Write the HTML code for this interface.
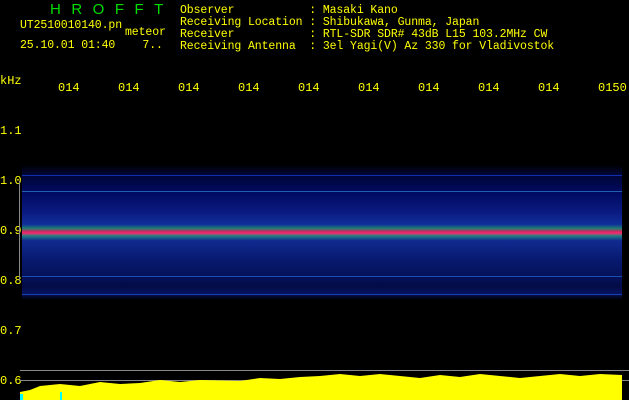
<!DOCTYPE html>
<html><head><meta charset="utf-8"><style>
body{margin:0;background:#000;width:629px;height:400px;overflow:hidden;position:relative;font-family:"Liberation Mono",monospace;color:#ff0;}
.t{position:absolute;font-size:11.5px;line-height:12px;white-space:pre;letter-spacing:-0.1px}
.g{color:#0d0;font-size:15px;font-family:"Liberation Sans",sans-serif;position:absolute;letter-spacing:10.5px;top:1px;left:50px}
.xl{position:absolute;top:81px;font-size:12px}
.yl{position:absolute;left:0;font-size:12px}
</style></head><body>
<div class="g">HROFFT</div>
<div class="t" style="left:20px;top:20px">UT2510010140.pn</div>
<div class="t" style="left:125px;top:27px">meteor</div>
<div class="t" style="left:20px;top:40px">25.10.01 01:40    7..</div>
<div class="t" style="left:180px;top:5px">Observer           : Masaki Kano
Receiving Location : Shibukawa, Gunma, Japan
Receiver           : RTL-SDR SDR# 43dB L15 103.2MHz CW
Receiving Antenna  : 3el Yagi(V) Az 330 for Vladivostok</div>
<div class="xl" style="left:0;top:74px">kHz</div>
<div class="xl" style="left:58px">014</div><div class="xl" style="left:118px">014</div><div class="xl" style="left:178px">014</div><div class="xl" style="left:238px">014</div><div class="xl" style="left:298px">014</div><div class="xl" style="left:358px">014</div><div class="xl" style="left:418px">014</div><div class="xl" style="left:478px">014</div><div class="xl" style="left:538px">014</div><div class="xl" style="left:598px">0150</div>
<div class="yl" style="top:124px">1.1</div><div class="yl" style="top:174px">1.0</div><div class="yl" style="top:224px">0.9</div><div class="yl" style="top:274px">0.8</div><div class="yl" style="top:324px">0.7</div><div class="yl" style="top:374px">0.6</div>
<div style="position:absolute;left:19px;top:181px;width:1px;height:100px;background:#888"></div>
<div style="position:absolute;left:22px;top:165px;width:600px;height:135px;background:linear-gradient(to bottom,#000 0,#000530 8px,#000a60 20%,#0a1a80 35%,#10309a 44%,#208070 47%,#e02060 49.5%,#f03070 50.5%,#208080 52.5%,#102a90 56%,#081a70 70%,#040f55 85%,#040c45 90%,#061260 95%,#000 100%)"></div>
<div style="position:absolute;left:22px;top:175px;width:600px;height:1px;background:#1030b0"></div>
<div style="position:absolute;left:22px;top:191px;width:600px;height:1px;background:#2060b0"></div>
<div style="position:absolute;left:22px;top:276px;width:600px;height:1px;background:#1850b0"></div>
<div style="position:absolute;left:22px;top:294px;width:600px;height:1px;background:#1840b0"></div>
<div style="position:absolute;left:20px;top:370px;width:609px;height:1px;background:#888"></div>
<div style="position:absolute;left:20px;top:380px;width:609px;height:1px;background:#888"></div>
<svg style="position:absolute;left:0;top:0" width="629" height="400">
<polygon fill="#ff0" points="20,400 20,392 30,390 40,386 60,384 80,386 100,382 120,384 140,383 160,380 180,382 200,380 240,381 260,378 280,379 300,377 320,376 340,374 360,376 380,374 400,376 420,378 440,375 460,377 480,374 500,376 520,378 540,376 560,374 580,376 600,374 622,375 622,400"/>
<rect x="20" y="394" width="3" height="6" fill="#0ff"/><rect x="60" y="392" width="2" height="8" fill="#0ff"/>
</svg>
</body></html>
